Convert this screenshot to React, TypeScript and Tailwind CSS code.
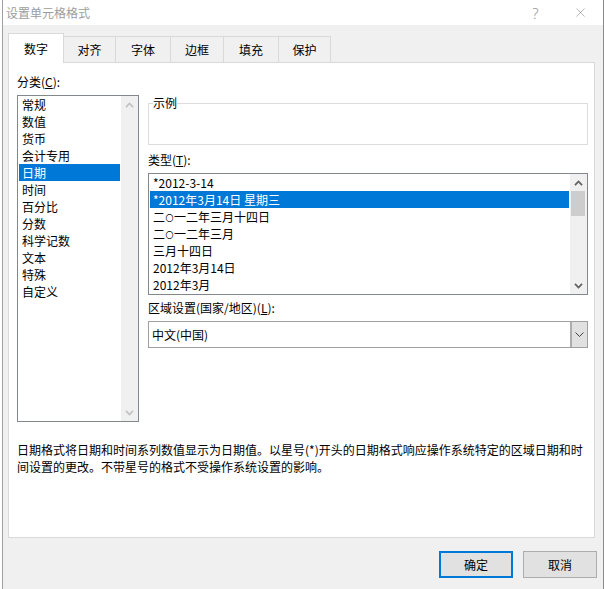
import { X } from 'lucide-react';

const categories = ['常规', '数值', '货币', '会计专用', '日期', '时间', '百分比', '分数', '科学记数', '文本', '特殊', '自定义'];

const types = [
  '*2012-3-14',
  '*2012年3月14日 星期三',
  '二〇一二年三月十四日',
  '二〇一二年三月',
  '三月十四日',
  '2012年3月14日',
  '2012年3月',
];

const tabs = [
  { label: '对齐', w: 'w-[52px]' },
  { label: '字体', w: 'w-[55px]' },
  { label: '边框', w: 'w-[53px]' },
  { label: '填充', w: 'w-[55px]' },
  { label: '保护', w: 'w-[52px]' },
];

function Chevron({ up, color }: { up?: boolean; color: string }) {
  return (
    <svg width="9" height="6" viewBox="0 0 9 6">
      <path
        d={up ? 'M1 5.2 L4.5 1.5 L8 5.2' : 'M1 0.8 L4.5 4.5 L8 0.8'}
        fill="none"
        stroke={color}
        strokeWidth="1.7"
      />
    </svg>
  );
}

function ScrollBar({ active }: { active?: boolean }) {
  const color = active ? '#606060' : '#c2c2c2';
  return (
    <div className="w-[17px] bg-[#f0f0f0] flex flex-col">
      <div className="h-[17px] flex items-center justify-center">
        <Chevron up color={color} />
      </div>
      {active && <div className="h-[25px] ml-px mr-[2px] bg-[#cdcdcd]" />}
      <div className="flex-1" />
      <div className="h-[17px] flex items-center justify-center">
        <Chevron color={color} />
      </div>
    </div>
  );
}

// the 〇 glyph is drawn narrow in the original font, so shrink it
function Ling({ text }: { text: string }) {
  const parts = text.split('〇');
  return (
    <>
      {parts.map((p, i) => (
        <span key={i}>
          {i > 0 && <span className="inline-block text-[8px] leading-[8px] align-[1px] px-[0.5px]">〇</span>}
          {p}
        </span>
      ))}
    </>
  );
}

function ListItem({ text, selected }: { text: string; selected?: boolean }) {
  return (
    <div
      className={
        'h-[17px] leading-[17px] pl-[3px] whitespace-nowrap ' +
        (selected ? 'bg-[#0078d7] text-white' : 'text-black')
      }
    >
      <Ling text={text} />
    </div>
  );
}

export default function App() {
  return (
    <div className="w-[604px] h-[589px] flex bg-white text-[12px] text-black font-['Noto_Sans_CJK_SC',sans-serif] overflow-hidden">
      <div className="w-[2px] bg-white" />
      <div className="flex-1 flex flex-col border-l border-l-[#a0a0a0] border-r border-r-[#8a8a8a]">
        {/* title bar */}
        <div className="h-[25px] bg-white flex items-center">
          <div className="pl-[3px] text-[#9d9d9d] leading-[16px] flex-1">设置单元格格式</div>
          <div className="w-[45px] h-full flex items-center justify-center text-[#999999] text-[15px] leading-[16px] font-['Noto_Sans',sans-serif] font-light">
            ?
          </div>
          <div className="w-[45px] h-full flex items-center justify-center text-[#8c8c8c]">
            <X size={15} strokeWidth={1} />
          </div>
        </div>

        {/* body */}
        <div className="flex-1 bg-[#f0f0f0] flex flex-col">
          <div className="h-[37px] pl-[5px] flex items-end">
            <div className="w-[56px] h-[30px] -mb-px relative z-10 bg-white border-x border-t border-[#d9d9d9] flex items-center justify-center leading-[16px]">
              数字
            </div>
            {tabs.map((t) => (
              <div
                key={t.label}
                className={t.w + ' h-[26px] border-t border-r border-[#d9d9d9] flex items-center justify-center leading-[16px]'}
              >
                {t.label}
              </div>
            ))}
          </div>

          <div className="ml-[5px] w-[587px] h-[476px] bg-white border border-[#d9d9d9] pt-[11px] flex flex-col">
            <div className="flex">
              <div className="pl-[8px]">
                <div className="leading-[16px]">
                  分类(<span className="underline">C</span>):
                </div>
                <div className="mt-[5px] w-[122px] h-[327px] border border-[#828790] flex">
                  <div className="flex-1 px-px">
                    {categories.map((c) => (
                      <ListItem key={c} text={c} selected={c === '日期'} />
                    ))}
                  </div>
                  <ScrollBar />
                </div>
              </div>

              <div className="ml-[9px] mt-[22px] w-[440px] flex flex-col">
                <fieldset className="h-[49px] border border-[#dcdcdc]">
                  <legend className="ml-[4px] leading-[14px]">示例</legend>
                </fieldset>
                <div className="mt-[7px] leading-[16px]">
                  类型(<span className="underline">T</span>):
                </div>
                <div className="mt-[5px] h-[122px] border border-[#828790] flex">
                  <div className="flex-1 px-px">
                    {types.map((t, i) => (
                      <ListItem key={t} text={t} selected={i === 1} />
                    ))}
                  </div>
                  <ScrollBar active />
                </div>
                <div className="mt-[5px] leading-[16px]">
                  区域设置(国家/地区)(<span className="underline">L</span>):
                </div>
                <div className="mt-[5px] h-[27px] border border-[#a0a0a0] flex">
                  <div className="flex-1 pl-[3px] flex items-center leading-[16px]">中文(中国)</div>
                  <div className="w-[17px] bg-[#e1e1e1] border-l-2 border-[#adadad] flex items-center justify-center">
                    <svg width="9" height="5" viewBox="0 0 9 5">
                      <path d="M0.5 0.5 L4.5 4.5 L8.5 0.5" fill="none" stroke="#404040" strokeWidth="1" />
                    </svg>
                  </div>
                </div>
              </div>
            </div>

            <p className="mt-[19px] pl-[8px] w-[578px] leading-[17px]">
              日期格式将日期和时间系列数值显示为日期值。以星号(*)开头的日期格式响应操作系统特定的区域日期和时间设置的更改。不带星号的格式不受操作系统设置的影响。
            </p>
          </div>

          <div className="mt-[13px] pr-[6px] flex justify-end gap-[10px]">
            <button className="w-[74px] h-[27px] bg-[#e1e1e1] border-2 border-[#0078d7] leading-[16px]">确定</button>
            <button className="w-[74px] h-[27px] bg-[#e1e1e1] border border-[#adadad] leading-[16px]">取消</button>
          </div>
        </div>
      </div>
    </div>
  );
}
